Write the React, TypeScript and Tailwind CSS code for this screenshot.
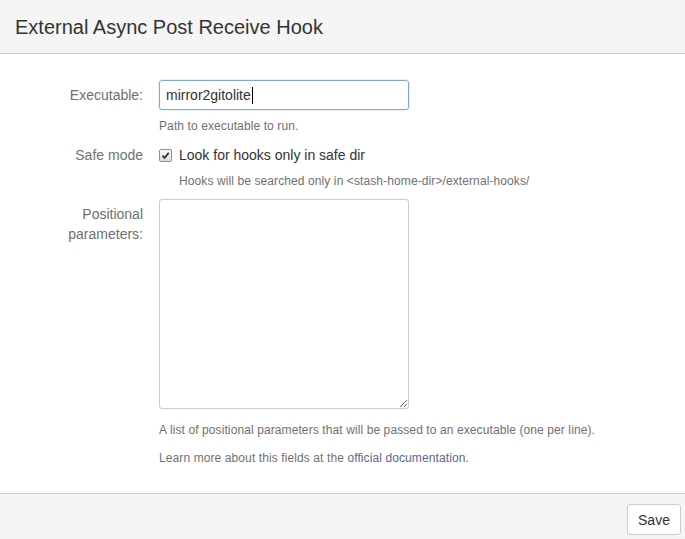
import React from "react";

const font = { fontFamily: '"Liberation Sans", Arial, sans-serif' };

function Label({ children }: { children: React.ReactNode }) {
  return (
    <div className="w-[143px] shrink-0 text-right text-sm leading-5 text-[#707070]">
      {children}
    </div>
  );
}

export default function App() {
  return (
    <div style={font} className="flex h-screen flex-col bg-white text-[#333]">
      <div className="flex h-[54px] shrink-0 items-center border-b border-[#cccccc] bg-[#f5f5f5] px-[15px]">
        <h2 className="text-[20px] leading-6 text-[#333]">External Async Post Receive Hook</h2>
      </div>

      <div className="flex-1 pt-[26px]">
        <div className="flex items-center gap-4">
          <Label>Executable:</Label>
          <div className="flex h-[30px] w-[250px] items-center rounded-[3px] border border-[#7fa8de] px-[6px] text-sm text-[#333] shadow-[0_0_2px_rgba(91,157,217,0.5)]">
            mirror2gitolite
            <span className="ml-px inline-block h-[17px] w-px bg-black" />
          </div>
        </div>
        <p className="ml-[159px] mt-[8px] text-xs leading-[17px] tracking-[0.1px] text-[#707070]">
          Path to executable to run.
        </p>

        <div className="mt-[10px] flex items-center gap-4">
          <Label>Safe mode</Label>
          <div className="flex items-center gap-[7px]">
            <span className="flex h-[13px] w-[13px] items-center justify-center rounded-[2px] border border-[#8f8f8f] bg-gradient-to-b from-[#fafafa] to-[#dedede]">
              <svg viewBox="0 0 10 10" className="h-[9px] w-[9px]">
                <path d="M1.5 5.2 L4 7.6 L8.6 2" fill="none" stroke="#333" strokeWidth="2" />
              </svg>
            </span>
            <span className="text-sm leading-5 text-[#333]">Look for hooks only in safe dir</span>
          </div>
        </div>
        <p className="ml-[179px] mt-[8px] text-xs leading-[17px] tracking-[0.1px] text-[#707070]">
          Hooks will be searched only in &lt;stash-home-dir&gt;/external-hooks/
        </p>

        <div className="mt-[9px] flex items-start gap-4">
          <div className="pt-[5px]">
            <Label>
              Positional
              <br />
              parameters:
            </Label>
          </div>
          <textarea
            className="h-[210px] w-[250px] rounded-[3px] border border-[#cccccc] bg-white p-[6px] text-sm outline-none"
            defaultValue=""
          />
        </div>
        <p className="ml-[159px] mt-[13px] text-xs leading-[17px] tracking-[0.1px] text-[#707070]">
          A list of positional parameters that will be passed to an executable (one per line).
        </p>
        <p className="ml-[159px] mt-[11px] text-xs leading-[17px] tracking-[0.1px] text-[#707070]">
          Learn more about this fields at the{" "}
          <a className="text-[#5a6797]">official documentation</a>.
        </p>
      </div>

      <div className="flex h-[46px] shrink-0 items-start justify-end border-t border-[#cccccc] bg-[#f5f5f5] pr-[4px] pt-[10px]">
        <button className="h-[31px] w-[54px] rounded-[3px] border border-[#cccccc] bg-white text-sm text-[#333]">
          Save
        </button>
      </div>
    </div>
  );
}
